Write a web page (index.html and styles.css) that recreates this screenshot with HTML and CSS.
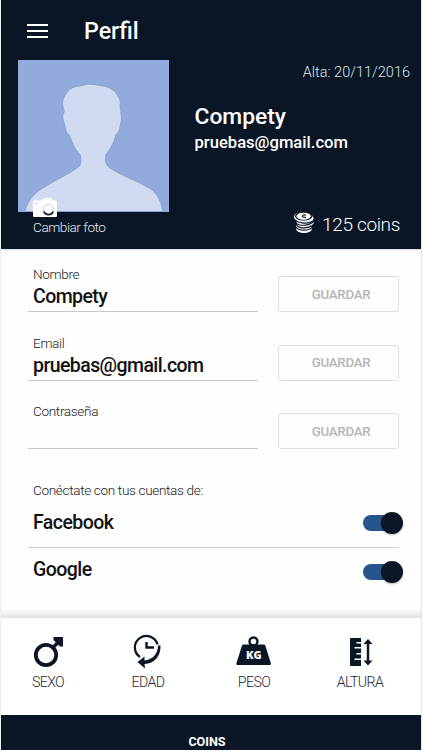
FILE: index.html
```html
<!DOCTYPE html>
<html lang="es">
<head>
    <meta charset="UTF-8">
    <meta name="viewport" content="width=device-width, initial-scale=1.0">
    <title>Perfil</title>
    <link rel="stylesheet" href="styles.css">
</head>
<body>
    <div class="screen">
        <header class="header">
            <div class="topbar">
                <button class="menu" aria-label="Menú"><span></span><span></span><span></span></button>
                <h1>Perfil</h1>
            </div>
            <div class="profile">
                <div class="photo-column">
                    <div class="photo">
                        <svg class="avatar" viewBox="0 0 151 151">
                            <path d="M7 151C10 139 16 133 24 128C38 119 51 114 61 106C64 102 63 98 62 94C56 88 54 81 51 74C47 72 47 64 45 58C44 53 47 53 46 49C43 43 45 37 49 32C53 26 59 26 65 25C71 22 82 25 88 26C94 28 98 31 100 36C104 40 101 46 103 51C102 54 105 56 103 61C102 67 101 73 98 74C96 82 93 88 88 94C87 99 87 103 91 107C103 115 119 120 132 128C139 133 143 140 145 151Z" fill="#d0dbf2" stroke="#819ac9" stroke-width=".8"/>
                        </svg>
                        <svg class="camera" viewBox="0 0 24 19">
                            <path d="M1 2.500H8L10 1Q11 0 12.500 0H16Q18 0 19 1L20.500 2.500H23Q24 2.500 24 4V18Q24 19 23 19H1Q0 19 0 18V4Q0 2.500 1 2.500Z" fill="#fff"/>
                            <circle cx="15.500" cy="11" r="4.800" fill="none" stroke="#cbd5ea" stroke-width="1.200"/>
                            <path d="M10.800 13.500A5 5 0 0 0 20.200 13.500" fill="none" stroke="#0a1626" stroke-width="1.600"/>
                            <circle cx="3.500" cy="5.500" r="1.200" fill="#d0dbf2"/>
                        </svg>
                    </div>
                    <span class="change-photo">Cambiar foto</span>
                </div>
                <div class="user">
                    <span class="joined">Alta: 20/11/2016</span>
                    <span class="user-name">Compety</span>
                    <span class="user-email">pruebas@gmail.com</span>
                    <div class="coins">
                        <svg viewBox="0 0 22 23">
                            <g fill="#fff" stroke="#0a1626" stroke-width="1.200">
                                <ellipse cx="11" cy="18" rx="8.500" ry="4.600"/>
                                <ellipse cx="11" cy="15" rx="8.500" ry="4.200"/>
                                <ellipse cx="12.500" cy="12.500" rx="9" ry="4.300" transform="rotate(-8 12 12)"/>
                                <ellipse cx="12" cy="9.800" rx="9.200" ry="4.300" transform="rotate(-8 12 10)"/>
                                <ellipse cx="10.700" cy="6.500" rx="10.500" ry="5.500" transform="rotate(5 10 7)"/>
                            </g>
                            <g fill="#0a1626" stroke="#fff" stroke-width="1">
                                <ellipse cx="10.700" cy="5.300" rx="8.300" ry="3.800" stroke="#0a1626"/>
                                <ellipse cx="10.700" cy="5.200" rx="6.800" ry="3" fill="#fff"/>
                                <path d="M13 4.200C9.500 2.700 7 6.800 13 6.300" fill="none" stroke="#0a1626" stroke-width="1.200"/>
                            </g>
                        </svg>
                        <span>125 coins</span>
                    </div>
                </div>
            </div>
        </header>

        <main class="content">
            <div class="field">
                <div class="field-text">
                    <span class="label">Nombre</span>
                    <span class="value">Compety</span>
                </div>
                <button class="save">GUARDAR</button>
            </div>
            <div class="field">
                <div class="field-text">
                    <span class="label">Email</span>
                    <span class="value">pruebas@gmail.com</span>
                </div>
                <button class="save">GUARDAR</button>
            </div>
            <div class="field">
                <div class="field-text">
                    <span class="label">Contraseña</span>
                    <span class="value"></span>
                </div>
                <button class="save">GUARDAR</button>
            </div>

            <p class="connect">Conéctate con tus cuentas de:</p>
            <div class="account">
                <span class="account-name">Facebook</span>
                <span class="switch"></span>
            </div>
            <div class="account">
                <span class="account-name">Google</span>
                <span class="switch"></span>
            </div>
        </main>

        <section class="stats">
            <div class="stat stat-sex">
                <svg viewBox="0 0 36 36">
                    <circle cx="16" cy="21" r="10.200" fill="none" stroke="#0a1626" stroke-width="3.800"/>
                    <path d="M22.500 14L28.500 8" stroke="#0a1626" stroke-width="3.500"/>
                    <path d="M23.500 3H33V12.500L30 12.500L23.500 6Z" fill="#0a1626"/>
                </svg>
                <span>SEXO</span>
            </div>
            <div class="stat stat-age">
                <svg viewBox="0 0 36 36">
                    <path d="M10 23A11.500 11.500 0 1 1 27.500 10.500" fill="none" stroke="#0a1626" stroke-width="2.200"/>
                    <path d="M16.500 8V13.500H24" fill="none" stroke="#0a1626" stroke-width="2.400"/>
                    <path d="M28 11.500H30.500C31 22 24.500 29.500 14.500 30L15 34.500L7.500 28L14.500 22.500V26.500C23 25.500 28 19.500 28 11.500Z" fill="#0a1626"/>
                </svg>
                <span>EDAD</span>
            </div>
            <div class="stat stat-weight">
                <svg viewBox="0 0 36 36">
                    <circle cx="17.500" cy="7.500" r="4" fill="none" stroke="#0a1626" stroke-width="2.400"/>
                    <path d="M7.500 10.500H28Q29 10.500 29.300 11.500L34.800 29Q35.100 31 34 31H1.500Q0 31 .5 29L6 11.500Q6.400 10.500 7.500 10.500Z" fill="#0a1626"/>
                    <text x="17.800" y="25.300" text-anchor="middle" class="kg">KG</text>
                </svg>
                <span>PESO</span>
            </div>
            <div class="stat stat-height">
                <svg viewBox="0 0 36 36">
                    <path d="M9 4H19V8H14.500V9.500H19V13H12.500V14.500H19V19H14.500V20.500H19V24.500H12.500V26H19V32H9Q8 32 8 31V5Q8 4 9 4Z" fill="#0a1626"/>
                    <path d="M26 8V28" stroke="#0a1626" stroke-width="2.500"/>
                    <path d="M21.500 10L26 5L30.500 10ZM21.500 26.500L26 31.500L30.500 26.500Z" fill="#0a1626"/>
                </svg>
                <span>ALTURA</span>
            </div>
        </section>

        <footer class="footer">COINS</footer>
    </div>
</body>
</html>
```

FILE: styles.css
```css
* {
    margin: 0;
    padding: 0;
    box-sizing: border-box;
}

body {
    font-family: Roboto, sans-serif;
    background: #fefefe;
    color: #111;
    overflow: hidden;
}

.screen {
    height: 750px;
    position: relative;
    display: flex;
    flex-direction: column;
    overflow: hidden;
    border-left: 1px solid #eeeff1;
    border-right: 1px solid #e2e3e5;
}

/* scroll thumb */
.screen::after {
    content: '';
    position: absolute;
    top: 246px;
    right: -1px;
    width: 1px;
    height: 58px;
    background: #777e8c;
}

.header {
    height: 249px;
    background: #0a1626;
    color: #fff;
    margin: 0 -1px;
    box-shadow: 0 1px 1px #dce1ec;
}

.topbar {
    height: 60px;
    display: flex;
    align-items: center;
    gap: 36px;
    padding: 1px 27px 0;
}

.menu {
    width: 21px;
    display: flex;
    flex-direction: column;
    gap: 4px;
    background: none;
    border: none;
}

.menu span {
    height: 2px;
    background: #fff;
}

.topbar h1 {
    font-size: 23.2px;
    font-weight: 500;
}

.profile {
    display: flex;
    padding-left: 18px;
}

.photo-column {
    width: 151px;
}

.photo {
    width: 151px;
    height: 152px;
    position: relative;
    background: #92abdd;
}

.avatar {
    display: block;
    width: 151px;
    height: 152px;
}

/* sits over the bottom edge of the photo */
.camera {
    position: absolute;
    left: 15px;
    bottom: -5px;
    width: 24px;
    height: 19px;
}

.change-photo {
    display: block;
    padding: 6px 0 0 15px;
    font-size: 13.6px;
    line-height: 18px;
    font-weight: 300;
    letter-spacing: -0.45px;
    color: #e4e7ec;
}

.user {
    flex: 1;
    display: flex;
    flex-direction: column;
    padding-left: 25.500px;
}

.joined {
    align-self: flex-end;
    margin: 1px 12px 0 0;
    font-size: 14.5px;
    line-height: 24px;
    font-weight: 300;
    color: #dfe3e9;
}

.user-name {
    margin-top: 18px;
    font-size: 22.8px;
    line-height: 28px;
    font-weight: 500;
}

.user-email {
    font-size: 16.6px;
    line-height: 24px;
    font-weight: 500;
}

.coins {
    display: flex;
    align-items: center;
    align-self: flex-end;
    gap: 7px;
    margin: 58px 22px 0 0;
    font-size: 19px;
    line-height: 24px;
    font-weight: 300;
    letter-spacing: -0.35px;
}

.coins svg {
    width: 22px;
    height: 23px;
    margin-top: -6px;
}

.content {
    height: 369px;
    padding: 15px 22px 0 27px;
    background: linear-gradient(to bottom, transparent 359px, #e2e2e2 369px);
}

.field {
    height: 68.5px;
    display: flex;
    justify-content: space-between;
}

.field-text {
    width: 230px;
    height: 48px;
    padding-left: 5px;
    display: flex;
    flex-direction: column;
    border-bottom: 1px solid #c8c8c8;
}

.label {
    font-size: 13.6px;
    line-height: 20px;
    font-weight: 300;
    letter-spacing: -0.35px;
    color: #222;
}

.value {
    font-size: 19.5px;
    line-height: 25px;
    font-weight: 500;
    letter-spacing: -0.58px;
}

.save {
    width: 121px;
    height: 36px;
    margin-top: 12px;
    padding-left: 5px;
    font-family: inherit;
    font-size: 13.3px;
    font-weight: 500;
    letter-spacing: -0.3px;
    color: #b5b5b5;
    background: none;
    border: 1px solid #dedede;
    border-radius: 3px;
}

.connect {
    padding: 10px 0 1px 5px;
    font-size: 13.6px;
    line-height: 20px;
    font-weight: 300;
    letter-spacing: -0.35px;
    color: #222;
}

.account {
    height: 46px;
    display: flex;
    align-items: center;
    justify-content: space-between;
    padding: 0 0 3px 5px;
}

.account + .account {
    height: 48px;
    border-top: 1px solid #cfcfcf;
}

.account-name {
    font-size: 19.5px;
    font-weight: 500;
    letter-spacing: -0.55px;
}

.switch {
    width: 36px;
    height: 16px;
    margin-top: 1px;
    display: flex;
    align-items: center;
    justify-content: flex-end;
    border-radius: 8px;
    background: #28548c;
}

.account + .account .switch {
    margin-top: 4px;
}

.switch::after {
    content: '';
    width: 22px;
    height: 22px;
    margin-right: -4px;
    flex-shrink: 0;
    border-radius: 50%;
    background: #0a1626;
    box-shadow: 0 1px 2px rgba(0, 0, 0, 0.3);
}

.stats {
    height: 97px;
    display: flex;
    background: #fff;
}

.stat {
    display: flex;
    flex-direction: column;
    align-items: center;
    width: 106px;
    padding-top: 16px;
    font-size: 14.2px;
    line-height: 20px;
    font-weight: 300;
    letter-spacing: -0.6px;
    color: #1c2738;
}

.stat svg {
    width: 36px;
    height: 36px;
    margin-bottom: 2px;
}

.stat-sex {
    width: 94px;
}

.kg {
    font-family: "Open Sans", sans-serif;
    font-size: 11px;
    font-weight: 800;
    letter-spacing: 0;
    fill: #fff;
}

.footer {
    height: 35px;
    margin: 0 -1px;
    padding: 17px 8px 0 0;
    background: #0a1626;
    color: #fff;
    font-size: 12.6px;
    line-height: 20px;
    font-weight: 700;
    text-align: center;
}
```
